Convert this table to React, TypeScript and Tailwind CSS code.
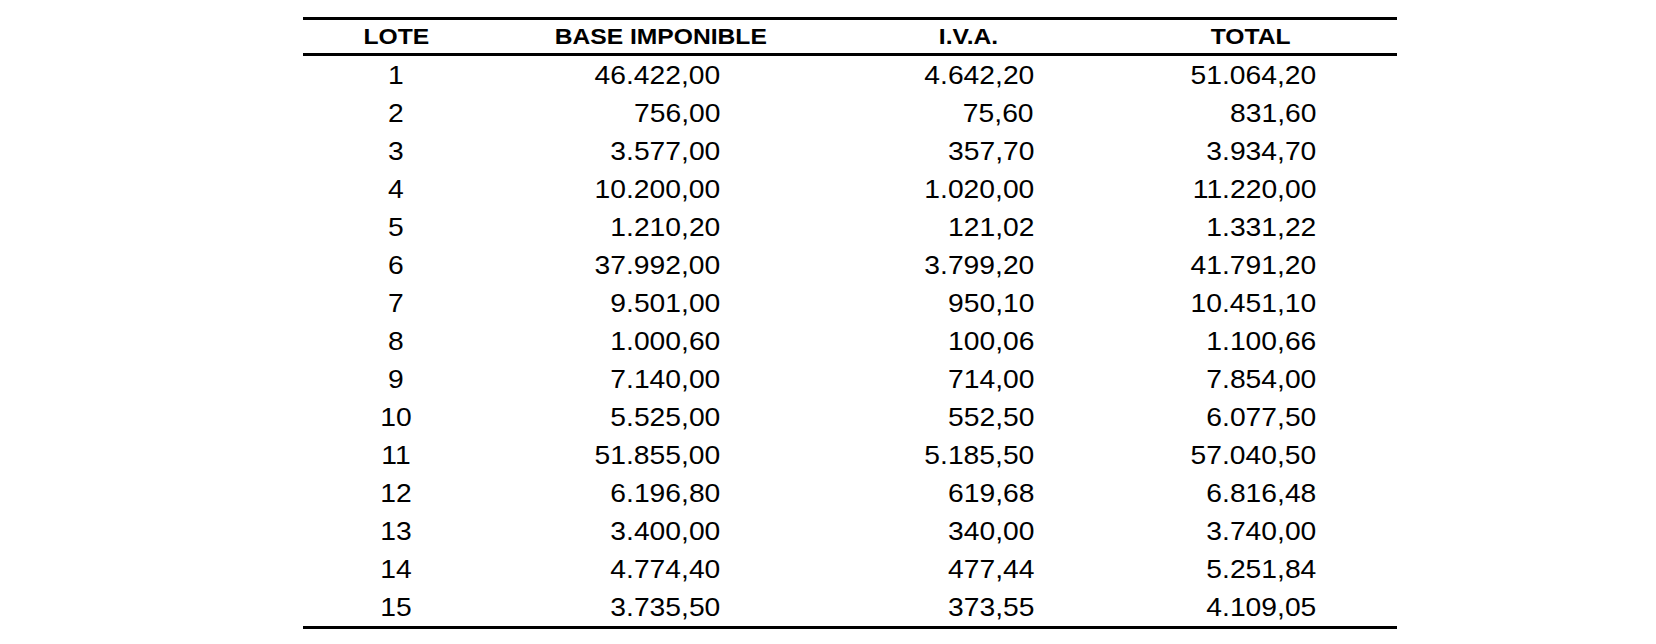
const rows: [string, string, string, string][] = [
  ['1', '46.422,00', '4.642,20', '51.064,20'],
  ['2', '756,00', '75,60', '831,60'],
  ['3', '3.577,00', '357,70', '3.934,70'],
  ['4', '10.200,00', '1.020,00', '11.220,00'],
  ['5', '1.210,20', '121,02', '1.331,22'],
  ['6', '37.992,00', '3.799,20', '41.791,20'],
  ['7', '9.501,00', '950,10', '10.451,10'],
  ['8', '1.000,60', '100,06', '1.100,66'],
  ['9', '7.140,00', '714,00', '7.854,00'],
  ['10', '5.525,00', '552,50', '6.077,50'],
  ['11', '51.855,00', '5.185,50', '57.040,50'],
  ['12', '6.196,80', '619,68', '6.816,48'],
  ['13', '3.400,00', '340,00', '3.740,00'],
  ['14', '4.774,40', '477,44', '5.251,84'],
  ['15', '3.735,50', '373,55', '4.109,05'],
]

const cols = 'grid grid-cols-[186px_344px_271px_293px]'

function Head({ children }: { children: string }) {
  return (
    <div className="flex items-center justify-center">
      <span className="inline-block scale-x-[1.12] text-[22px] font-bold leading-none">{children}</span>
    </div>
  )
}

function Num({ children, pad }: { children: string; pad: string }) {
  return (
    <div className={`flex items-center justify-end ${pad}`}>
      <span className="inline-block origin-right scale-x-[1.13] text-[25px] leading-none">{children}</span>
    </div>
  )
}

export default function App() {
  return (
    <div className="min-h-screen w-full bg-white pt-[17px] text-black" style={{ fontFamily: '"Liberation Sans", Arial, sans-serif' }}>
      <div className="ml-[303px] w-[1094px] border-y-[3px] border-black">
        {/* cabecera */}
        <div className={`${cols} h-[36px] border-b-[3px] border-black`}>
          <Head>LOTE</Head>
          <Head>BASE IMPONIBLE</Head>
          <Head>I.V.A.</Head>
          <Head>TOTAL</Head>
        </div>

        {rows.map(([lote, base, iva, total]) => (
          <div key={lote} className={`${cols} h-[38px]`}>
            <div className="flex items-center justify-center">
              <span className="inline-block scale-x-[1.13] text-[25px] leading-none">{lote}</span>
            </div>
            <Num pad="pr-[113px]">{base}</Num>
            <Num pad="pr-[70px]">{iva}</Num>
            <Num pad="pr-[81px]">{total}</Num>
          </div>
        ))}
      </div>
    </div>
  )
}
